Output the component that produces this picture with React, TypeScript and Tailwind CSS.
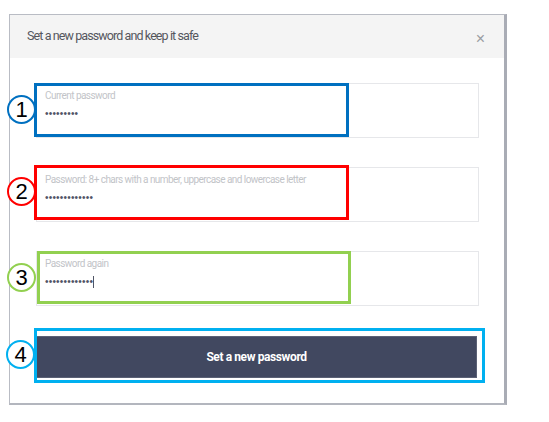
import React from 'react'

const narrow = { fontFamily: 'Roboto, "Liberation Sans", sans-serif' }

function Badge({ n, color, top }: { n: number; color: string; top: number }) {
  return (
    <div
      className="absolute left-[-30px] flex h-[29px] w-[29px] items-center justify-center rounded-full border-2 bg-white text-[22px] leading-none text-black"
      style={{ borderColor: color, top, fontFamily: '"Liberation Sans", sans-serif' }}
    >
      {n}
    </div>
  )
}

function Field({ label, dots, cursor, n, color, box }: {
  label: string
  dots: number
  cursor?: boolean
  n: number
  color: string
  box: { top: number; left: number; width: number; height: number }
}) {
  return (
    <div className="relative h-[55px] w-[443px] border border-[#e6e7ea] bg-white pl-[8px] pt-[6px]">
      <div className="text-[10px] leading-[12px] tracking-[-0.55px] text-[#c2c4c8]" style={narrow}>{label}</div>
      <div className="mt-[6px] flex items-center text-[10px] leading-[12px] text-[#505566]" style={{ fontFamily: '"Liberation Sans", sans-serif' }}>
        <span className="tracking-[0.2px]">{'•'.repeat(dots)}</span>
        {cursor && <span className="h-[12px] w-[1px] bg-[#505566]" />}
      </div>
      <div className="pointer-events-none absolute border-[3px]" style={{ borderColor: color, ...box }} />
      <Badge n={n} color={color} top={box.top + 12} />
    </div>
  )
}

export default function App() {
  return (
    <div className="h-[422px] w-[549px] bg-white pl-[9px] pt-[14px]">
      <div className="h-[391px] w-[498px] border border-[#b9bcc4] border-r-[3px] border-b-[2px] border-r-[#a9acb5] border-b-[#b3b6be] bg-white">
        <div className="flex h-[43px] items-center justify-between bg-[#f4f4f4] pl-[17px] pr-[19px]">
          <span className="text-[12.5px] tracking-[-0.9px] text-[#55575e]" style={narrow}>Set a new password and keep it safe</span>
          <span className="mt-[5px] text-[16px] leading-none text-[#9a9ca2]" style={{ fontFamily: '"Liberation Sans", sans-serif' }}>×</span>
        </div>
        <div className="flex flex-col gap-[29px] pl-[26px] pt-[25px]">
          <Field label="Current password" dots={9} n={1} color="#0070c0" box={{ top: -1, left: -3, width: 315, height: 54 }} />
          <Field label="Password: 8+ chars with a number, uppercase and lowercase letter" dots={13} n={2} color="#ff0000" box={{ top: -3, left: -3, width: 315, height: 55 }} />
          <Field label="Password again" dots={13} cursor n={3} color="#92d050" box={{ top: -1, left: 0, width: 314, height: 53 }} />
          <div className="relative mt-[1px] h-[42px] w-[441px]">
            <button className="flex h-full w-full items-center justify-center border border-[#5b6175] bg-[#414860] text-[12px] font-bold tracking-[-0.4px] text-white" style={narrow}>
              Set a new password
            </button>
            <div className="pointer-events-none absolute left-[-2px] top-[-8px] h-[55px] w-[451px] border-[3px] border-[#00b0f0]" />
            <div className="absolute left-[-30px] top-[4px] flex h-[29px] w-[29px] items-center justify-center rounded-full border-2 border-[#00b0f0] bg-white text-[22px] leading-none text-black" style={{ fontFamily: '"Liberation Sans", sans-serif' }}>
              4
            </div>
          </div>
        </div>
      </div>
    </div>
  )
}
